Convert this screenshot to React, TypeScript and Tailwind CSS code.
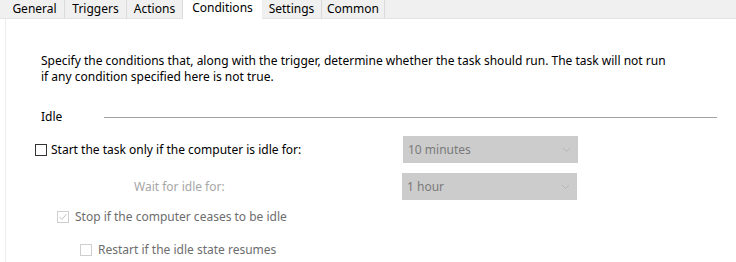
import React from "react";

const tabs = [
  { name: "General", w: "w-[60px]" },
  { name: "Triggers", w: "w-[62px]" },
  { name: "Actions", w: "w-[56px]" },
  { name: "Conditions", w: "w-[79px]", active: true },
  { name: "Settings", w: "w-[60px]" },
  { name: "Common", w: "w-[63px]" },
];

function Chevron() {
  return (
    <svg width="9" height="6" viewBox="0 0 9 6" className="shrink-0">
      <path d="M1 1 L4.5 4.5 L8 1" fill="none" stroke="#b5b5b5" strokeWidth="1" />
    </svg>
  );
}

function Dropdown({ value }: { value: string }) {
  return (
    <div className="flex h-[27px] w-[175px] items-center justify-between bg-[#cccccc] pl-[5px] pr-[7px] text-[#7a7a7a]">
      <span>{value}</span>
      <Chevron />
    </div>
  );
}

export default function App() {
  return (
    <div
      className="relative h-[262px] w-[736px] overflow-hidden bg-white text-[12px] text-black"
      style={{ fontFamily: '"Noto Sans", "Open Sans", sans-serif' }}
    >
      {/* tab strip */}
      <div className="flex h-[19px] border-b border-[#e3e3e3] bg-[#f0f0f0] pl-[5px]">
        {tabs.map((t) =>
          t.active ? (
            <div
              key={t.name}
              className={`${t.w} relative -mb-px flex h-[20px] items-start justify-center bg-white leading-[16px]`}
            >
              {t.name}
            </div>
          ) : (
            <div
              key={t.name}
              className={`${t.w} flex items-end justify-center border-r border-[#dadada] pb-[1px] leading-[16px]`}
            >
              {t.name}
            </div>
          )
        )}
      </div>
      {/* content */}
      <div className="ml-[5px] h-[243px] border-l border-[#ececec] pl-[35px]">
        <div className="pt-[34px] leading-[16px]">
          <p>
            Specify the conditions that, along with the trigger, determine whether the task should run. The task will not run
          </p>
          <p>if any condition specified here is not true.</p>
        </div>
        <div className="mt-[24px] flex items-center">
          <span className="w-[63px] leading-[16px]">Idle</span>
          <div className="h-px w-[613px] bg-[#a0a0a0]" />
        </div>
        <div className="mt-[11px] flex h-[27px] items-center">
          <div className="-ml-[6px] mr-[4px] h-[12px] w-[12px] border border-[#333333] bg-white" />
          <span className="w-[352px]">Start the task only if the computer is idle for:</span>
          <Dropdown value="10 minutes" />
        </div>
        <div className="mt-[10px] flex h-[27px] items-center">
          <span className="ml-[93px] w-[268px] text-[#a6a6a6]">Wait for idle for:</span>
          <Dropdown value="1 hour" />
        </div>
        <div className="mt-[10px] flex h-[13px] items-center">
          <div className="ml-[16px] mr-[6px] flex h-[12px] w-[12px] items-center justify-center border border-[#cfcfcf] bg-white">
            <svg width="10" height="10" viewBox="0 0 10 10">
              <path d="M1.5 5 L4 7.5 L8.5 2" fill="none" stroke="#c4c4c4" strokeWidth="1" />
            </svg>
          </div>
          <span className="text-[#6d6d6d]">Stop if the computer ceases to be idle</span>
        </div>
        <div className="mt-[20px] flex h-[13px] items-center">
          <div className="ml-[39px] mr-[6px] h-[12px] w-[12px] border border-[#cfcfcf] bg-white" />
          <span className="text-[#6d6d6d]">Restart if the idle state resumes</span>
        </div>
      </div>
    </div>
  );
}
